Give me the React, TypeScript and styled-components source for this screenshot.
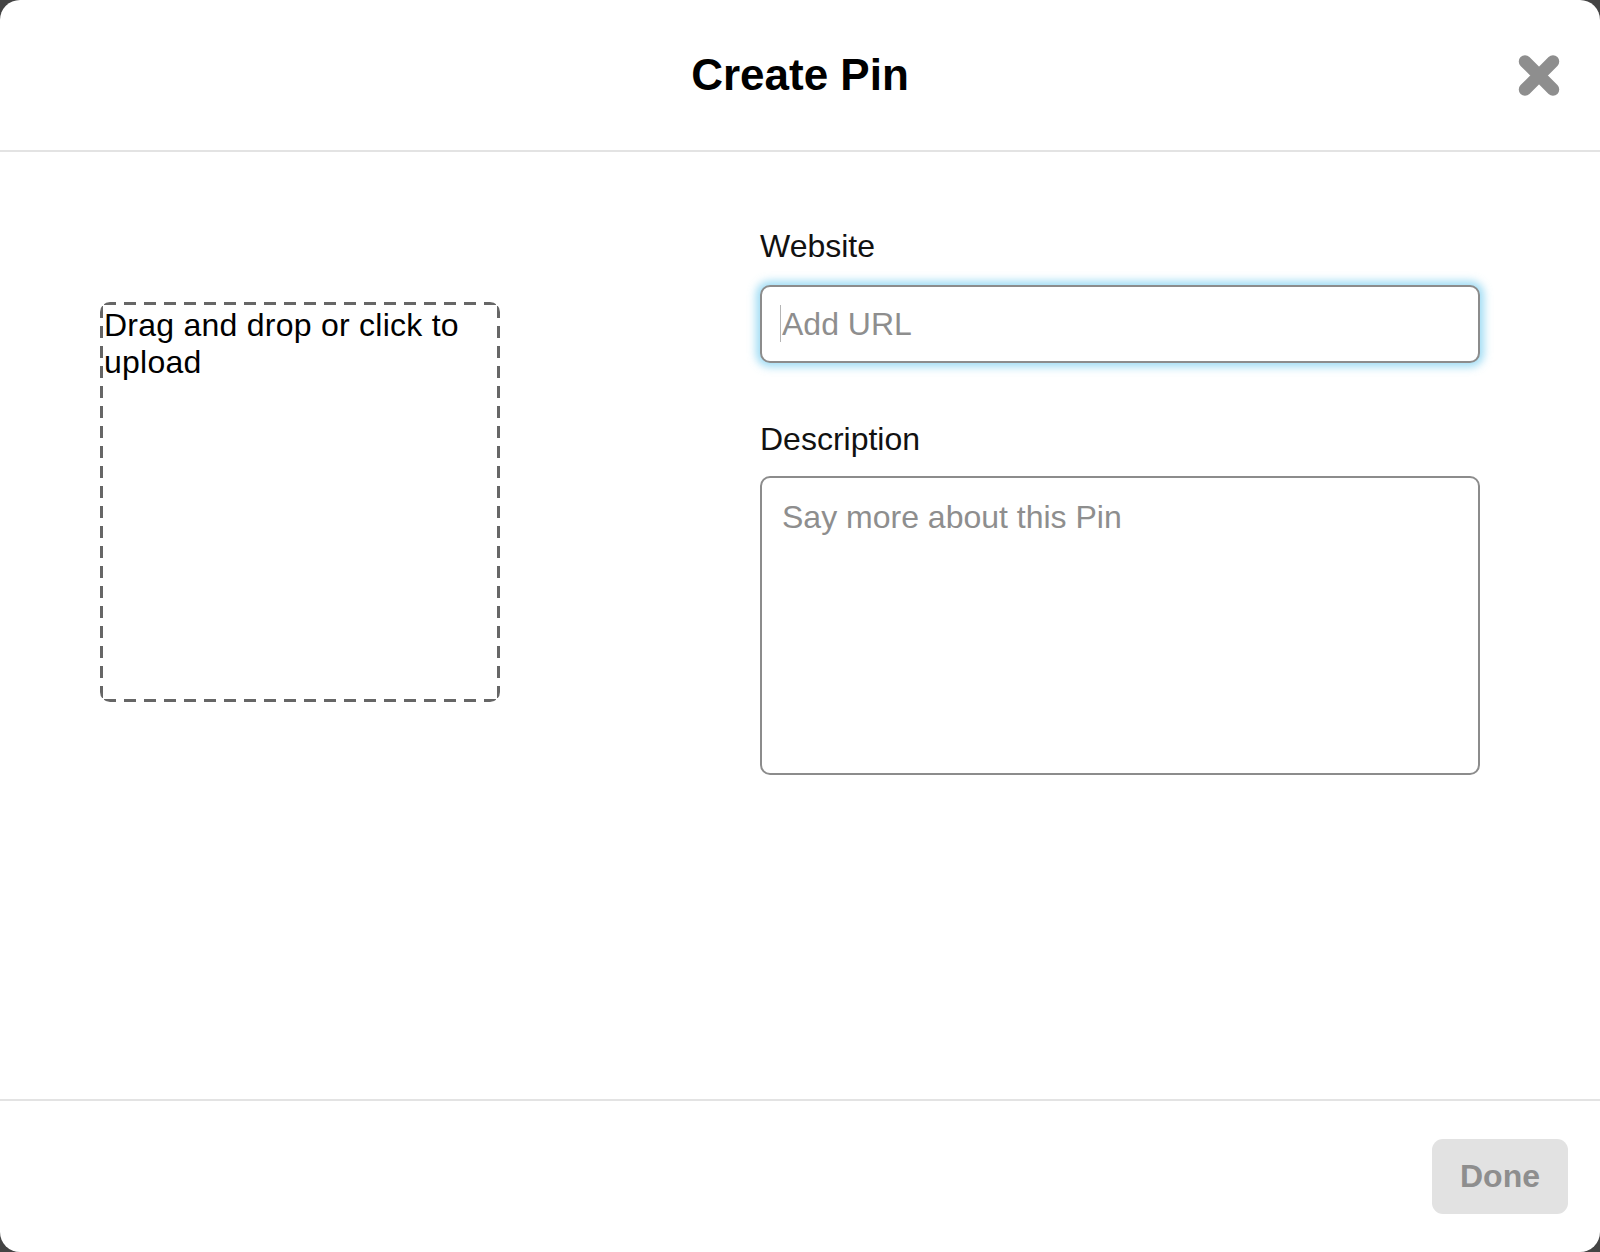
import React from "react";
import styled, { createGlobalStyle } from "styled-components";

const GlobalStyle = createGlobalStyle`
  html, body {
    margin: 0;
    padding: 0;
    background: #444444;
  }
  body {
    font-family: "Liberation Sans", Arial, Helvetica, sans-serif;
  }
  * { box-sizing: border-box; }
`;

const Modal = styled.div`
  width: 1600px;
  height: 1252px;
  background: #ffffff;
  border-radius: 20px;
  display: flex;
  flex-direction: column;
  overflow: hidden;
`;

const Header = styled.header`
  position: relative;
  height: 152px;
  flex: none;
  border-bottom: 2px solid #e3e3e3;
  display: flex;
  align-items: center;
  justify-content: center;
`;

const Title = styled.h1`
  margin: 0;
  font-size: 44px;
  font-weight: 700;
  color: #000;
  line-height: 1;
`;

const CloseButton = styled.button`
  position: absolute;
  right: 40px;
  top: 54px;
  width: 42px;
  height: 43px;
  padding: 0;
  border: none;
  background: transparent;
  display: flex;
  cursor: pointer;
`;

const Body = styled.main`
  flex: 1;
  display: grid;
  grid-template-columns: 400px 1fr;
  column-gap: 260px;
  padding: 0 120px 0 100px;
  align-items: start;
`;

const dash = "#666666";

const DropZone = styled.div`
  margin-top: 150px;
  width: 400px;
  height: 400px;
  border-radius: 10px;
  background:
    linear-gradient(to right, ${dash} 12px, transparent 12px) 4px 0 / 20px 3px repeat-x,
    linear-gradient(to right, ${dash} 12px, transparent 12px) 4px 100% / 20px 3px repeat-x,
    linear-gradient(to bottom, ${dash} 12px, transparent 12px) 0 4px / 3px 20px repeat-y,
    linear-gradient(to bottom, ${dash} 12px, transparent 12px) 100% 4px / 3px 20px repeat-y;
  font-size: 32px;
  letter-spacing: 0.25px;
  line-height: 37px;
  color: #000;
  padding: 5px 3px 3px 4px;
`;

const Form = styled.div`
  margin-top: 76px;
  display: flex;
  flex-direction: column;
`;

const Label = styled.label<{ $gap: number }>`
  font-size: 32px;
  line-height: 37px;
  color: #111;
  margin-bottom: ${(p) => p.$gap}px;
`;

const InputWrap = styled.div`
  position: relative;
  margin-bottom: 58px;
`;

const UrlInput = styled.input`
  width: 100%;
  height: 78px;
  border: 2px solid #8c8c8c;
  border-radius: 10px;
  padding: 0 18px 0 20px;
  font-family: "Liberation Sans", Arial, sans-serif;
  font-size: 32px;
  color: #111;
  outline: none;
  box-shadow: 0 0 8px 4px rgba(120, 205, 240, 0.7);
  &::placeholder { color: #8e8e8e; }
`;

const Caret = styled.span`
  position: absolute;
  left: 20px;
  top: 20px;
  width: 1px;
  height: 37px;
  background: #b5b5b5;
`;

const DescArea = styled.textarea`
  width: 100%;
  height: 299px;
  border: 2px solid #8c8c8c;
  border-radius: 10px;
  padding: 21px 18px 0 20px;
  font-family: "Liberation Sans", Arial, sans-serif;
  font-size: 32px;
  line-height: 37px;
  color: #111;
  resize: none;
  outline: none;
  &::placeholder { color: #8e8e8e; }
`;

const Footer = styled.footer`
  height: 153px;
  flex: none;
  border-top: 2px solid #e3e3e3;
  display: flex;
  align-items: center;
  justify-content: flex-end;
  padding-right: 32px;
`;

const DoneButton = styled.button`
  width: 136px;
  height: 75px;
  border: none;
  border-radius: 11px;
  background: #e2e2e2;
  color: #8e8e8e;
  font-family: "Liberation Sans", Arial, sans-serif;
  font-size: 32px;
  font-weight: 700;
  padding: 0;
`;

export default function App() {
  return (
    <>
      <GlobalStyle />
      <Modal>
        <Header>
          <Title>Create Pin</Title>
          <CloseButton aria-label="Close">
            <svg width="42" height="43" viewBox="0 0 42 43">
              <path
                d="M7 7.5 L35 35.5 M35 7.5 L7 35.5"
                stroke="#8e8e8e"
                strokeWidth="12.5"
                strokeLinecap="round"
                fill="none"
              />
            </svg>
          </CloseButton>
        </Header>
        <Body>
          <DropZone>Drag and drop or click to upload</DropZone>
          <Form>
            <Label $gap={20}>Website</Label>
            <InputWrap>
              <UrlInput placeholder="Add URL" />
              <Caret />
            </InputWrap>
            <Label $gap={18}>Description</Label>
            <DescArea placeholder="Say more about this Pin" />
          </Form>
        </Body>
        <Footer>
          <DoneButton>Done</DoneButton>
        </Footer>
      </Modal>
    </>
  );
}
